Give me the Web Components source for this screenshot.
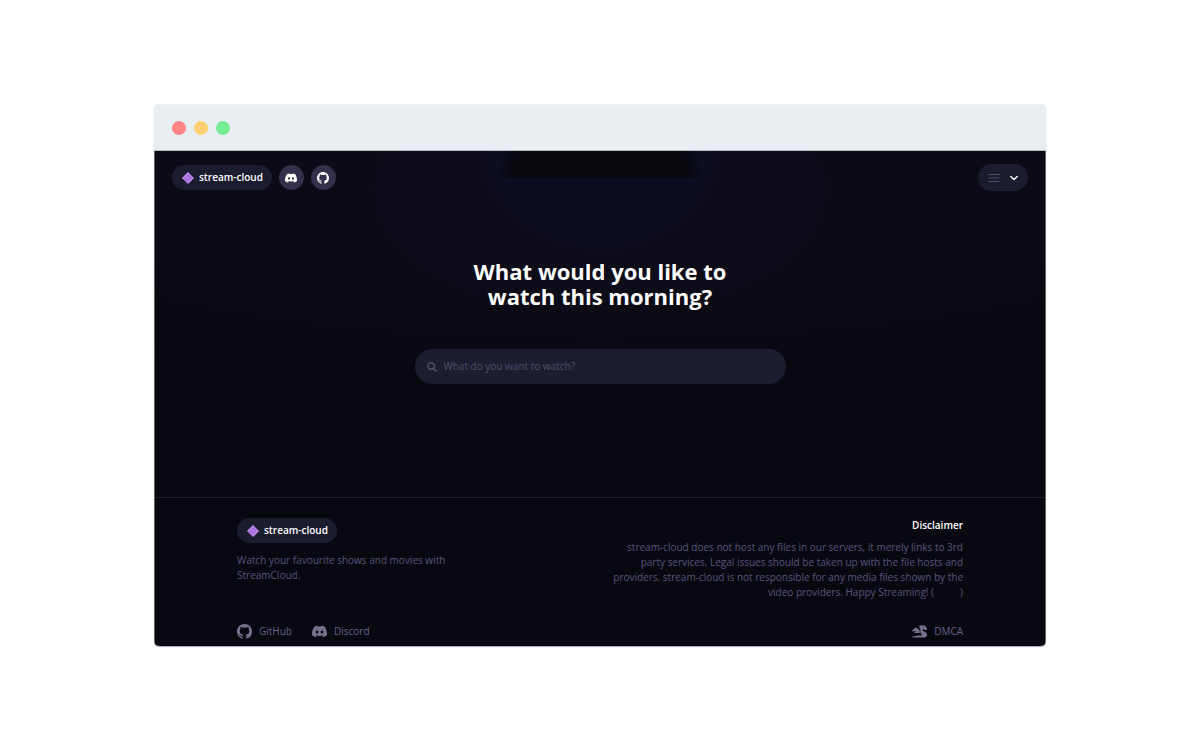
<!DOCTYPE html>
<html lang="en">
<head>
<meta charset="utf-8">
<meta name="viewport" content="width=device-width, initial-scale=1">
<title>stream-cloud</title>
<style>
  body { margin: 0; background: #fff; font: 10px/15px "Open Sans", "Noto Sans", sans-serif; color: #5a557d; }
</style>
</head>
<body>
<browser-window>
  <stream-nav></stream-nav>
  <search-hero></search-hero>
  <stream-footer></stream-footer>
</browser-window>
<script>
const icons = {
  github: ['0 0 16 16', '<path d="M8 0C3.58 0 0 3.58 0 8c0 3.54 2.29 6.53 5.47 7.59.4.07.55-.17.55-.38 0-.19-.01-.82-.01-1.49-2.01.37-2.53-.49-2.69-.94-.09-.23-.48-.94-.82-1.13-.28-.15-.68-.52-.01-.53.63-.01 1.08.58 1.23.82.72 1.21 1.87.87 2.33.66.07-.52.28-.87.51-1.07-1.78-.2-3.64-.89-3.64-3.95 0-.87.31-1.59.82-2.15-.08-.2-.36-1.02.08-2.12 0 0 .67-.21 2.2.82.64-.18 1.32-.27 2-.27s1.36.09 2 .27c1.53-1.04 2.2-.82 2.2-.82.44 1.1.16 1.92.08 2.12.51.56.82 1.27.82 2.15 0 3.07-1.87 3.75-3.65 3.95.29.25.54.73.54 1.48 0 1.07-.01 1.93-.01 2.2 0 .21.15.46.55.38A8.01 8.01 0 0 0 16 8c0-4.42-3.58-8-8-8z"/>'],
  discord: ['0 0 16 16', '<path d="M13.545 2.907a13.227 13.227 0 0 0-3.257-1.011.05.05 0 0 0-.052.025c-.141.25-.297.577-.406.833a12.19 12.19 0 0 0-3.658 0 8.258 8.258 0 0 0-.412-.833.051.051 0 0 0-.052-.025c-1.125.194-2.22.534-3.257 1.011a.041.041 0 0 0-.021.018C.356 6.024-.213 9.047.066 12.032c.001.014.01.028.021.037a13.276 13.276 0 0 0 3.995 2.02.05.05 0 0 0 .056-.019c.308-.42.582-.863.818-1.329a.05.05 0 0 0-.01-.059.051.051 0 0 0-.018-.011 8.875 8.875 0 0 1-1.248-.595.05.05 0 0 1-.02-.066.051.051 0 0 1 .015-.019c.084-.063.168-.129.248-.195a.05.05 0 0 1 .051-.007c2.619 1.196 5.454 1.196 8.041 0a.052.052 0 0 1 .053.007c.08.066.164.132.248.195a.051.051 0 0 1-.004.085 8.254 8.254 0 0 1-1.249.594.05.05 0 0 0-.03.03.052.052 0 0 0 .003.041c.24.465.515.909.817 1.329a.05.05 0 0 0 .056.019 13.235 13.235 0 0 0 4.001-2.02.049.049 0 0 0 .021-.037c.334-3.451-.559-6.449-2.366-9.106a.034.034 0 0 0-.02-.019Zm-8.198 7.307c-.789 0-1.438-.724-1.438-1.612 0-.889.637-1.613 1.438-1.613.807 0 1.45.73 1.438 1.613 0 .888-.637 1.612-1.438 1.612Zm5.316 0c-.788 0-1.438-.724-1.438-1.612 0-.889.637-1.613 1.438-1.613.807 0 1.451.73 1.438 1.613 0 .888-.631 1.612-1.438 1.612Z"/>'],
  search: ['0 0 512 512', '<path d="M505 442.7L405.3 343c-4.5-4.5-10.6-7-17-7H372c27.6-35.3 44-79.7 44-128C416 93.1 322.9 0 208 0S0 93.1 0 208s93.1 208 208 208c48.3 0 92.7-16.4 128-44v16.3c0 6.4 2.5 12.5 7 17l99.7 99.7c9.4 9.4 24.6 9.4 33.9 0l28.3-28.3c9.4-9.4 9.4-24.6.1-34zM208 336c-70.7 0-128-57.2-128-128 0-70.7 57.2-128 128-128 70.7 0 128 57.2 128 128 0 70.7-57.2 128-128 128z"/>'],
  dragon: ['0 0 640 512', '<path d="M18.32 255.78L192 223.96l-91.28 68.69c-10.08 10.08-2.94 27.31 11.31 27.31h222.7c-9.44-26.4-14.73-54.47-14.73-83.38v-42.27l-119.73-87.6c-23.82-15.88-55.29-14.01-77.06 4.59L5.81 227.64c-12.38 10.33-3.45 30.42 12.51 28.14zm556.87 34.1l-100.66-50.31A47.992 47.992 0 0 1 448 196.65v-36.69h64l28.09 22.63c6 6 14.14 9.37 22.63 9.37h30.97a32 32 0 0 0 28.62-17.69l14.31-28.62a32.005 32.005 0 0 0-3.02-33.51l-74.53-99.38C553.02 4.7 543.54 0 533.47 0H296.02c-7.13 0-10.7 8.57-5.66 13.61L352 63.96 292.42 88.8c-5.9 2.95-5.9 11.36 0 14.31L352 127.96v108.62c0 72.08 36.03 139.39 96 179.38-195.59 6.81-344.56 41.01-434.1 60.91C5.78 478.67 0 485.88 0 494.2 0 504 7.95 512 17.76 512h499.08c63.29.01 119.61-47.56 122.99-110.76 2.52-47.28-22.73-90.4-64.64-111.36zM489.18 66.25l45.65 11.41c-2.75 10.91-12.47 18.89-24.13 18.26-12.96-.71-25.85-12.53-21.52-29.67z"/>'],
  menu: ['0 0 12 12', '<path d="M.5 2.5h11M.5 6h11M.5 9.5h11" fill="none" stroke="currentColor" stroke-width="1.2"/>'],
  chevron: ['0 0 12 12', '<path d="M2.8 4.5 6 7.5l3.2-3" fill="none" stroke="currentColor" stroke-width="1.4" stroke-linecap="round" stroke-linejoin="round"/>'],
  logo: ['0 0 12 12', '<path d="M6 0l6 6-6 6-6-6z" fill="#b27be8"/><path d="M2.4 4.2l5 5M4.2 2.4l5 5M3.3 7.5l1.7 1.7M7 3.4l1.7 1.7" stroke="#8753c2" stroke-width=".8" stroke-dasharray="1.2 .7"/><path d="M6.3.6 0.6 6.3M11.4 6.3 6.3 11.4" stroke="#d8bdf0" stroke-width=".9" stroke-dasharray="1 .8"/>']
};

function define(name, html, setup) {
  const template = document.createElement('template');
  template.innerHTML = html;
  customElements.define(name, class extends HTMLElement {
    constructor() {
      super();
      this.attachShadow({ mode: 'open' }).append(template.content.cloneNode(true));
    }
    connectedCallback() { if (setup) setup(this); }
  });
}

define('ui-icon', `
  <style>
    :host { display: block; width: 12px; height: 12px; flex: none; }
    svg { display: block; width: 100%; height: 100%; fill: currentColor; }
  </style>
  <svg aria-hidden="true"></svg>`, el => {
  const [box, body] = icons[el.getAttribute('name')];
  const svg = el.shadowRoot.querySelector('svg');
  svg.setAttribute('viewBox', box);
  svg.innerHTML = body;
});

define('brand-pill', `
  <style>
    :host { display: block; width: fit-content; }
    a { display: flex; align-items: center; gap: 5px; height: 25px; padding: 0 9px 0 10px; box-sizing: border-box;
        border-radius: 13px; background: #1c1c2f; color: #fff; font-weight: 600; text-decoration: none; }
  </style>
  <a href="#"><ui-icon name="logo"></ui-icon>stream-cloud</a>`);

define('round-link', `
  <style>
    :host { display: block; }
    a { display: grid; place-items: center; width: 25px; height: 25px; border-radius: 50%; background: #32304a; color: #fff; }
  </style>
  <a href="#"><slot></slot></a>`, el => {
  el.shadowRoot.querySelector('a').setAttribute('aria-label', el.getAttribute('label'));
});

define('footer-link', `
  <style>
    :host { display: block; }
    a { display: flex; align-items: center; gap: 7px; color: #67628a; text-decoration: none; }
    ::slotted(ui-icon) { width: 15px; height: 15px; color: #77738f; }
  </style>
  <a href="#"><slot name="icon"></slot><slot></slot></a>`);

define('browser-window', `
  <style>
    :host { display: flex; flex-direction: column; justify-content: center; min-height: 100vh; box-sizing: border-box; padding: 24px 154px; }
    .frame { border-radius: 5px; overflow: hidden; box-shadow: 0 1px 1px #a9a6b0; background: #e8eef1; }
    .bar { display: flex; align-items: center; gap: 8px; height: 47px; padding: 1px 18px 0; box-sizing: border-box;
           background: #e8eef1; border-top: 1px solid #f0f3f4; border-bottom: 1px solid #b5bfc2; }
    i { width: 14px; height: 14px; border-radius: 50%; background: #ff8585; }
    i:nth-child(2) { background: #ffd071; }
    i:nth-child(3) { background: #74ed94; }
    .page {
      border: solid #66666c;
      border-width: 0 1px;
      background:
        radial-gradient(104px 80px at 50% 27px, #08080f 0 86%, #08080f00 100%) center top / 206px 27px no-repeat,
        radial-gradient(126px 106px at 50% 0, #0d0e22 0 80%, #0d0e2200 100%),
        radial-gradient(235px 130px at 50% 40px, #0d0c1a 0 75%, #0d0c1a00 100%),
        radial-gradient(900px 240px at 50% 0, #0b0a15 0 60%, #080810 100%);
    }
  </style>
  <div class="frame">
    <div class="bar"><i></i><i></i><i></i></div>
    <div class="page"><slot></slot></div>
  </div>`);

define('stream-nav', `
  <style>
    :host { display: block; }
    nav { display: flex; align-items: center; gap: 7px; padding: 13px 17px 12px; }
    button { display: flex; align-items: center; gap: 8px; height: 27px; margin-left: auto; padding: 0 8px 0 10px; border: 0;
             border-radius: 14px; background: #1c1c2f; color: #fff; }
    button ui-icon:first-child { color: #504d6b; }
  </style>
  <nav>
    <brand-pill></brand-pill>
    <round-link label="Discord"><ui-icon name="discord"></ui-icon></round-link>
    <round-link label="GitHub"><ui-icon name="github"></ui-icon></round-link>
    <button type="button" aria-label="Menu"><ui-icon name="menu"></ui-icon><ui-icon name="chevron"></ui-icon></button>
  </nav>`);

define('search-hero', `
  <style>
    :host { display: block; padding: 56px 24px 113px; }
    h1 { max-width: 270px; margin: 0 auto 40px; font-size: 22px; line-height: 25px; font-weight: 700; color: #fff; text-align: center; }
    label { display: flex; align-items: center; gap: 7px; max-width: 371px; height: 35px; margin: 0 auto; padding: 0 12px; box-sizing: border-box;
            border-radius: 18px; background: #1d1d30; color: #504d6b; }
    ui-icon { width: 10px; height: 10px; }
    input { flex: 1; min-width: 0; padding: 0; border: 0; outline: 0; background: none; font: inherit; color: #fff; }
    input::placeholder { color: #504d6b; opacity: 1; }
  </style>
  <h1>What would you like to watch this morning?</h1>
  <label><ui-icon name="search"></ui-icon><input type="text" aria-label="Search" placeholder="What do you want to watch?"></label>`);

define('stream-footer', `
  <style>
    :host { display: block; border-top: 1px solid #1f1f30; }
    footer { display: grid; grid-template-columns: 1fr 1fr; row-gap: 24px; max-width: 726px; margin: 0 auto; padding: 20px 0 7px; }
    p { margin: 0; }
    .about { max-width: 230px; }
    .about p { margin-top: 10px; }
    .legal { text-align: right; justify-self: end; max-width: 354px; }
    h2 { margin: 0 0 7px; font-size: 10px; line-height: 15px; font-weight: 600; color: #fff; }
    .links { display: flex; gap: 20px; }
    .end { justify-content: flex-end; }
  </style>
  <footer>
    <div class="about"><brand-pill></brand-pill>
      <p>Watch your favourite shows and movies with StreamCloud.</p></div>
    <div class="legal"><h2>Disclaimer</h2>
      <p>stream-cloud does not host any files in our servers, it merely links to 3rd party services. Legal issues should be taken up with the file hosts and providers. stream-cloud is not responsible for any media files shown by the video providers. Happy Streaming! (&nbsp;&nbsp;&nbsp;&nbsp;&nbsp;&nbsp;&nbsp;&nbsp;&nbsp;&nbsp;)</p></div>
    <div class="links">
      <footer-link><ui-icon slot="icon" name="github"></ui-icon>GitHub</footer-link>
      <footer-link><ui-icon slot="icon" name="discord"></ui-icon>Discord</footer-link>
    </div>
    <div class="links end"><footer-link><ui-icon slot="icon" name="dragon"></ui-icon>DMCA</footer-link></div>
  </footer>`);
</script>
</body>
</html>
